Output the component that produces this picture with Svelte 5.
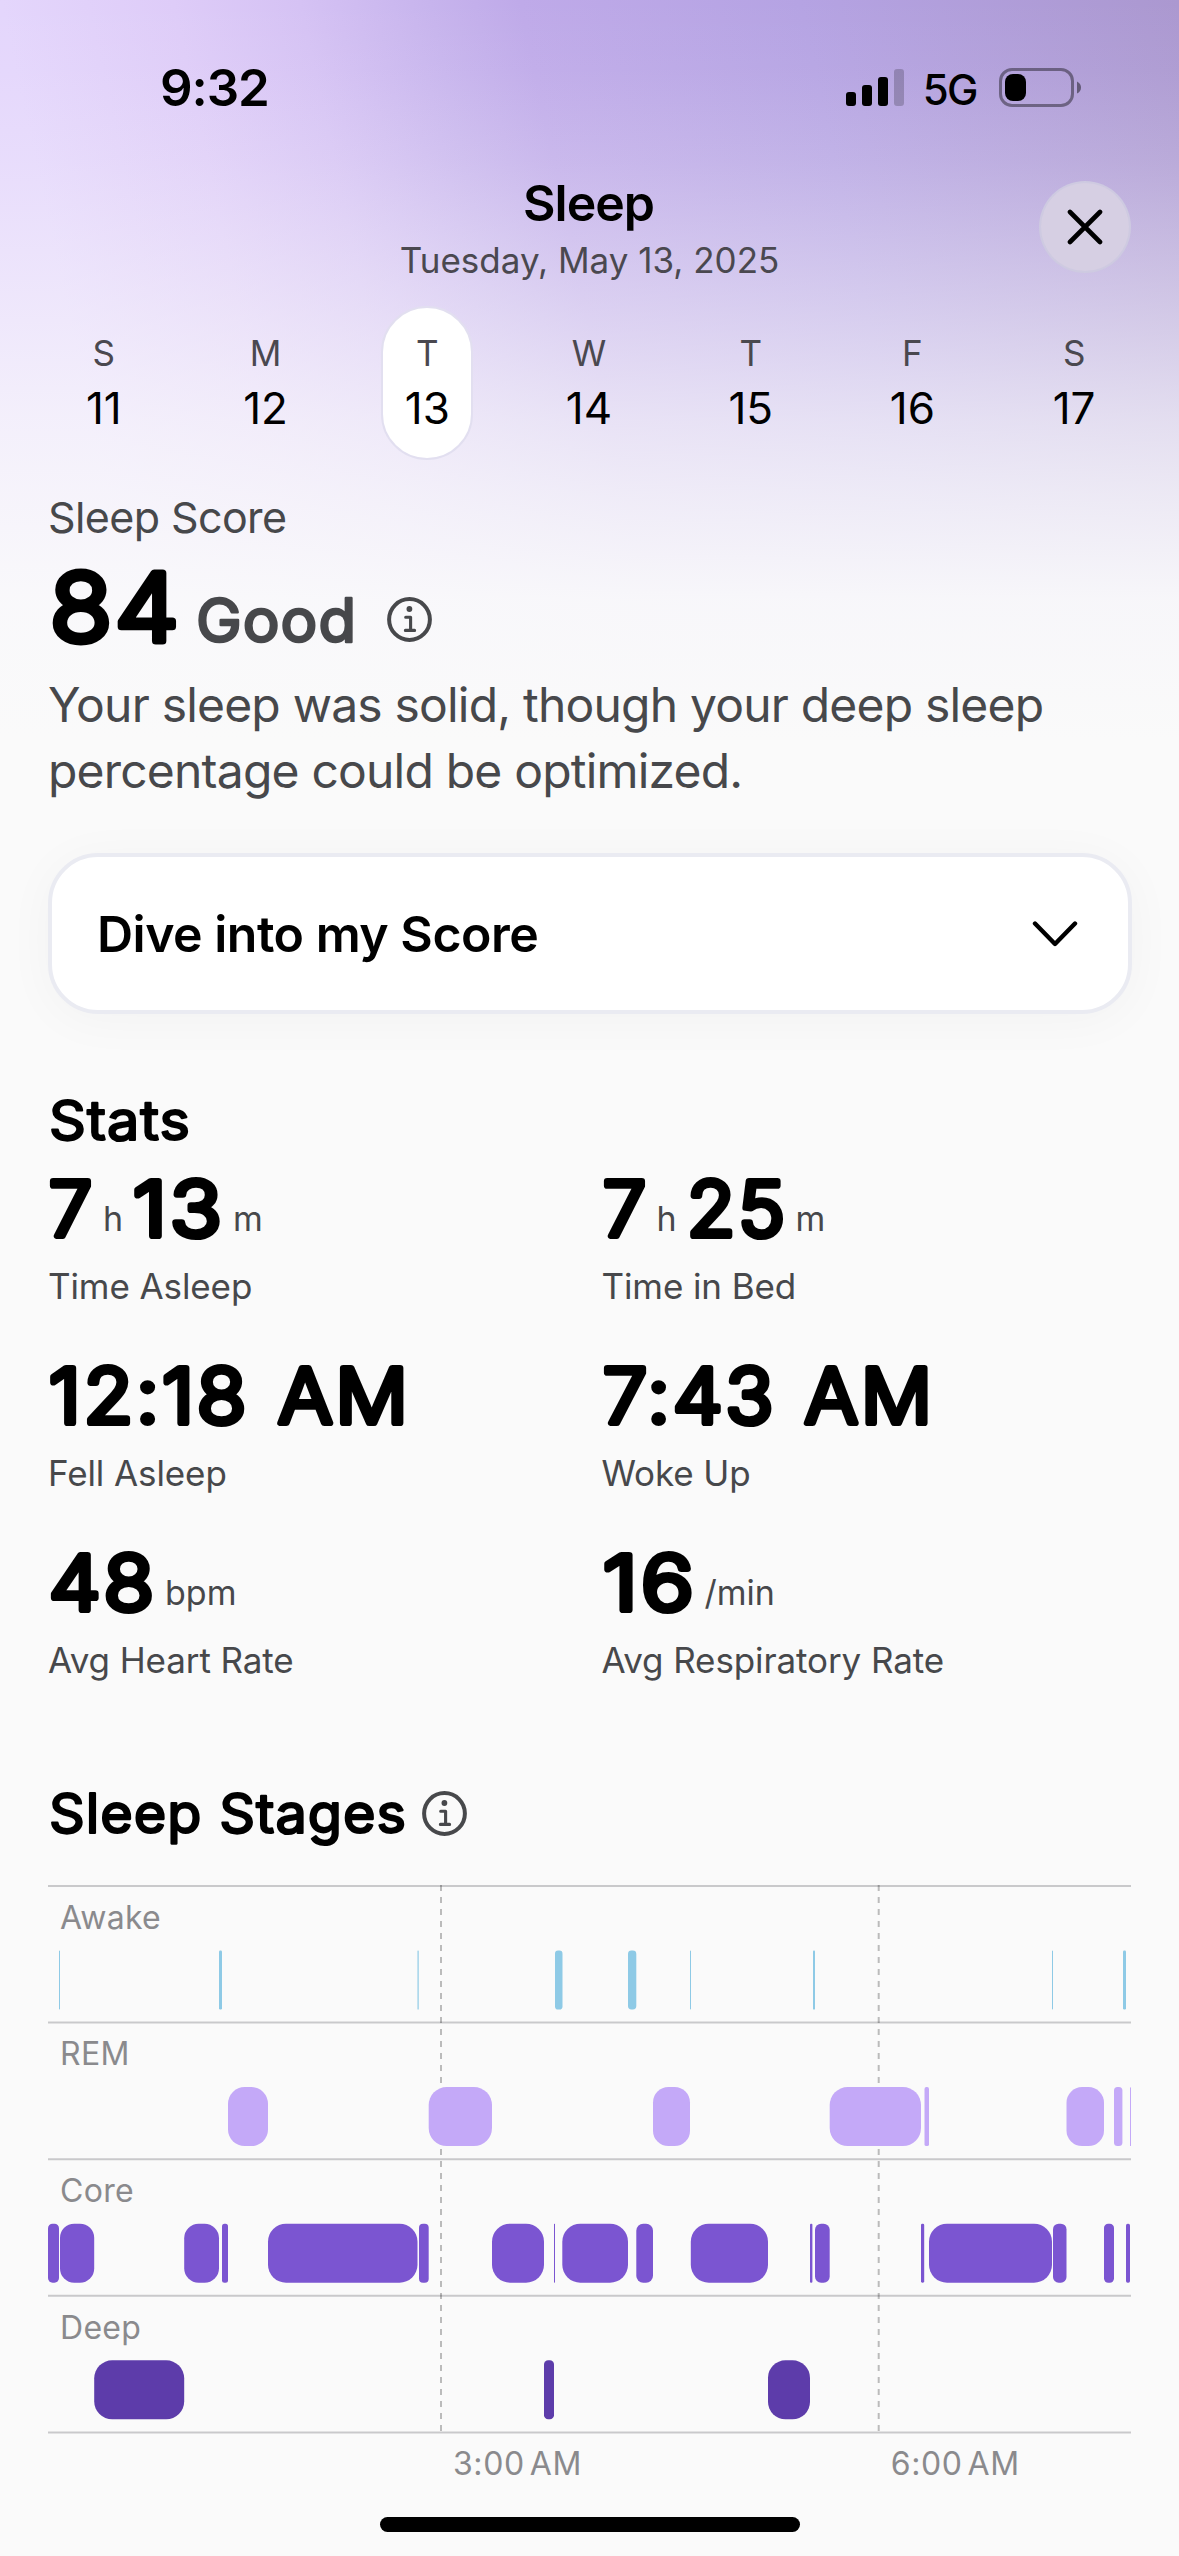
<script lang="ts">
  interface Day {
    letter: string;
    date: number;
  }

  interface StatPart {
    value: string;
    width: number;
    unit?: string;
  }

  interface Stat {
    label: string;
    parts: StatPart[];
  }

  interface Stage {
    name: string;
    color: string;
    bars: [number, number][];
  }

  let selected = 13;

  const days: Day[] = ['S', 'M', 'T', 'W', 'T', 'F', 'S'].map((letter, i) => ({ letter, date: 11 + i }));

  const stats: Stat[] = [
    { label: 'Time Asleep', parts: [{ value: '7', width: 43, unit: 'h' }, { value: '13', width: 89, unit: 'm' }] },
    { label: 'Time in Bed', parts: [{ value: '7', width: 43, unit: 'h' }, { value: '25', width: 98, unit: 'm' }] },
    { label: 'Fell Asleep', parts: [{ value: '12:18 AM', width: 359 }] },
    { label: 'Woke Up', parts: [{ value: '7:43 AM', width: 329 }] },
    { label: 'Avg Heart Rate', parts: [{ value: '48', width: 105, unit: 'bpm' }] },
    { label: 'Avg Respiratory Rate', parts: [{ value: '16', width: 91, unit: '/min' }] }
  ];

  // [start, end] of each segment, in chart units
  const stages: Stage[] = [
    {
      name: 'Awake',
      color: '#8ecae6',
      bars: [[11, 12], [171, 174], [369.5, 370.7], [507, 514.5], [580, 588.3], [642, 643], [765, 767], [1004, 1005], [1075, 1078]]
    },
    {
      name: 'REM',
      color: '#c4a9f8',
      bars: [[180, 220], [380.7, 444], [605, 642], [781.7, 873], [876.5, 881], [1018.5, 1056], [1066, 1074.4], [1082, 1083]]
    },
    {
      name: 'Core',
      color: '#7b55d1',
      bars: [
        [0, 11], [12, 46.2], [136.2, 171], [174, 180], [220, 369.5], [371, 380.7], [444, 496], [506, 507],
        [514.3, 580], [588.3, 605], [642.8, 720], [762, 764.4], [767, 781.7], [873, 876.2], [881, 1004],
        [1005, 1018.5], [1056, 1066], [1078, 1082]
      ]
    },
    {
      name: 'Deep',
      color: '#5d3caa',
      bars: [[46.2, 136.2], [496, 506], [720, 762]]
    }
  ];

  const ticks = [
    { x: 393, label: '3:00 AM' },
    { x: 830.7, label: '6:00 AM' }
  ];

  const rowHeight = 136.6;
</script>

{#snippet info()}
  <svg class="info" viewBox="0 0 45 45" fill="none" stroke="currentColor">
    <circle cx="22.5" cy="22.5" r="20.4" stroke-width="4" />
    <circle cx="22.4" cy="12" r="2.9" fill="currentColor" stroke="none" />
    <path d="M18.7 20.3H23.6V33.4M18.4 33.4H27.6" stroke-width="3.1" stroke-linecap="round" stroke-linejoin="round" />
  </svg>
{/snippet}

<!-- lighter text with a round-joined stroke, gives soft terminals -->
{#snippet rounded(text: string, width: number, height: number, stroke: number)}
  <svg class="rounded" {width} {height}>
    <text
      x="-1"
      y={height - stroke / 2}
      font-size={(height - stroke) / 0.727}
      stroke-width={stroke}
      textLength={width + 3}
      lengthAdjust="spacingAndGlyphs"
    >{text}</text>
  </svg>
{/snippet}

<div class="screen">
  <div class="status-bar">
    <span class="clock">9:32</span>
    <div class="status-icons">
      <svg width="58" height="37" viewBox="0 0 58 37">
        <rect x="0" y="23" width="10" height="14" rx="3" />
        <rect x="16" y="16" width="10" height="21" rx="3" />
        <rect x="32" y="8" width="10" height="29" rx="3" />
        <rect x="48" y="0" width="10" height="37" rx="3" opacity="0.2" />
      </svg>
      <span class="network">5G</span>
      <svg width="82" height="39" viewBox="0 0 82 39">
        <rect x="1.5" y="1.5" width="72" height="36" rx="11.5" fill="none" stroke="#000" stroke-width="3" opacity="0.4" />
        <rect x="6" y="6" width="21" height="27" rx="8" />
        <path d="M78 13.5Q82 15.500 82 19.500T78 25.500Z" opacity="0.45" />
      </svg>
    </div>
  </div>

  <header class="header">
    <div class="titles">
      <h1>Sleep</h1>
      <p class="date">Tuesday, May 13, 2025</p>
    </div>
    <button class="close" aria-label="Close">
      <svg width="36" height="36" viewBox="0 0 36 36">
        <path d="M3 3L33 33M33 3L3 33" stroke="#000" stroke-width="4.6" stroke-linecap="round" />
      </svg>
    </button>
  </header>

  <nav class="week">
    {#each days as day}
      <button class="day" class:active={day.date === selected} on:click={() => (selected = day.date)}>
        <span class="day-letter">{day.letter}</span>
        <span class="day-date">{day.date}</span>
      </button>
    {/each}
  </nav>

  <main>
    <p class="score-label">Sleep Score</p>
    <div class="score-row">
      <span class="score number">{@render rounded('84', 129, 75, 7)}</span>
      <span class="rating">{@render rounded('Good', 158, 47, 2.6)}</span>
      {@render info()}
    </div>
    <p class="summary">Your sleep was solid, though your deep sleep percentage could be optimized.</p>

    <button class="dive">
      <span>Dive into my Score</span>
      <svg width="46" height="28" viewBox="0 0 46 28" fill="none">
        <path d="M3 3.500L23 24L43 3.500" stroke="#000" stroke-width="4.400" stroke-linecap="round" stroke-linejoin="round" />
      </svg>
    </button>

    <h2 class="stats-title">{@render rounded('Stats', 139, 42, 2.2)}</h2>
    <div class="stats">
      {#each stats as stat}
        <div class="stat">
          <div class="stat-value number">
            {#each stat.parts as part}
              {@render rounded(part.value, part.width, 61, 6.2)}
              {#if part.unit}
                <span class="unit">{part.unit}</span>
              {/if}
            {/each}
          </div>
          <p class="stat-label">{stat.label}</p>
        </div>
      {/each}
    </div>

    <div class="stages-title">
      <h2>{@render rounded('Sleep Stages', 355, 42, 2.2)}</h2>
      {@render info()}
    </div>

    <svg class="chart" width="1083" height="610" viewBox="0 0 1083 610">
      {#each [0, 1, 2, 3, 4] as line}
        <line x1="0" x2="1083" y1={line * rowHeight + 1} y2={line * rowHeight + 1} class="rule" />
      {/each}
      {#each ticks as tick}
        <line x1={tick.x} x2={tick.x} y1="0" y2={rowHeight * 4 + 1} class="tick" />
        <text x={tick.x + 12} y="590" class="chart-label tick-label">{tick.label}</text>
      {/each}
      {#each stages as stage, row}
        <text x="12" y={row * rowHeight + 43.8} class="chart-label">{stage.name}</text>
        {#each stage.bars as [start, end]}
          <rect
            x={start}
            y={row * rowHeight + 65.5}
            width={end - start}
            height="59"
            rx={Math.min(18, (end - start) / 2.4)}
            fill={stage.color}
          />
        {/each}
      {/each}
    </svg>
  </main>

  <div class="home-indicator"></div>
</div>

<style>
  :global(body) {
    background: #fafafa;
  }

  .screen {
    width: 1179px;
    height: 2556px;
    display: flex;
    flex-direction: column;
    overflow: hidden;
    box-sizing: border-box;
    font-family: Inter, 'Liberation Sans', sans-serif;
    color: #000;
    background:
      linear-gradient(
        to bottom,
        rgba(250, 250, 251, 0) 0,
        rgba(250, 250, 251, 0.05) 70px,
        rgba(250, 250, 251, 0.18) 160px,
        rgba(250, 250, 251, 0.46) 300px,
        rgba(250, 250, 251, 0.7) 420px,
        rgba(250, 250, 251, 0.81) 490px,
        rgba(250, 250, 251, 0.96) 600px,
        #fafafa 740px
      ),
      linear-gradient(
        78deg,
        #e4d6fc 158px,
        #deccf8 327px,
        #d5c2f4 451px,
        #c7b4ed 578px,
        #bfaae9 666px,
        #b5a3e3 940px,
        #ab98d0 1311px
      );
    background-color: #fafafa;
    background-repeat: no-repeat;
    background-size: 100% 760px;
  }

  h1,
  h2,
  p {
    margin: 0;
  }

  button {
    font-family: inherit;
    color: inherit;
    padding: 0;
    border: none;
    background: none;
  }

  svg {
    display: block;
    flex: none;
  }

  .rounded {
    overflow: visible;
    font-weight: 400;
    letter-spacing: 1px;
    fill: currentColor;
    stroke: currentColor;
    stroke-linejoin: round;
  }

  .number .rounded {
    font-weight: 300;
    letter-spacing: 3px;
    word-spacing: 3px;
  }

  .status-bar {
    height: 175px;
    display: flex;
    align-items: center;
    justify-content: space-between;
    padding: 0 98px 0 160px;
  }

  .clock {
    font-size: 51px;
    font-weight: 600;
    letter-spacing: -1.1px;
  }

  .status-icons {
    display: flex;
    align-items: center;
  }

  .network {
    margin: 3px 22px 0 19px;
    font-size: 42px;
    font-weight: 500;
    letter-spacing: -1.5px;
  }

  .header {
    display: grid;
    grid-template-columns: 1fr auto 1fr;
    height: 114px;
    padding: 0 48px;
  }

  .titles {
    grid-column: 2;
    text-align: center;
  }

  h1 {
    padding-right: 2px;
    font-size: 50px;
    font-weight: 600;
    line-height: 56px;
    letter-spacing: -1px;
  }

  .date {
    font-size: 35px;
    line-height: 58px;
    color: #4a484f;
  }

  .close {
    box-sizing: border-box;
    justify-self: end;
    margin-top: 6px;
    width: 92px;
    height: 92px;
    display: flex;
    align-items: center;
    justify-content: center;
    border-radius: 50%;
    border: 2px solid rgba(204, 200, 224, 0.8);
    background: #d6cfe3;
  }

  .week {
    display: grid;
    grid-template-columns: repeat(7, 1fr);
    justify-items: center;
    margin-top: 17px;
    padding: 0 24px 0 23px;
  }

  .day {
    box-sizing: border-box;
    width: 92px;
    height: 154px;
    padding-top: 20px;
    display: flex;
    flex-direction: column;
    align-items: center;
    border: 2px solid transparent;
    border-radius: 46px;
  }

  .day.active {
    background: #fff;
    border-color: #e2dff0;
  }

  .day-letter {
    font-size: 35px;
    line-height: 50px;
    color: #4a484f;
  }

  .day-date {
    font-size: 44px;
    line-height: 60px;
  }

  main {
    padding: 0 48px;
  }

  .score-label {
    margin-top: 27px;
    font-size: 43px;
    line-height: 60px;
    letter-spacing: -0.6px;
    color: #47484b;
  }

  .score-row {
    height: 100px;
    margin-top: 10px;
    display: flex;
    align-items: flex-end;
  }

  .score {
    margin: 0 17px 13px 3px;
  }

  .rating {
    margin-bottom: 14px;
    color: #47484b;
  }

  .info {
    width: 45px;
    height: 45px;
    color: #47484b;
  }

  .score-row .info {
    margin: 0 0 15px 32px;
  }

  .summary {
    margin-top: 15px;
    font-size: 48px;
    line-height: 66px;
    letter-spacing: -0.8px;
    color: #47484b;
  }

  .dive {
    box-sizing: border-box;
    width: 1084px;
    height: 161px;
    margin-top: 49px;
    padding: 0 50px 0 45px;
    display: flex;
    align-items: center;
    justify-content: space-between;
    border: 4px solid #eaebf2;
    border-radius: 50px;
    background: #fff;
    box-shadow: 0 6px 50px rgba(0, 0, 0, 0.035);
    font-size: 50px;
    font-weight: 600;
    letter-spacing: -0.5px;
  }

  h2 {
    height: 68px;
    display: flex;
    align-items: center;
    padding-left: 2px;
  }

  .stats-title {
    margin-top: 72px;
  }

  .stats {
    margin-top: 13px;
    display: grid;
    grid-template-columns: repeat(2, 1fr);
    gap: 43px 24px;
  }

  .stat-value {
    display: flex;
    align-items: flex-end;
    height: 84px;
    padding-left: 2px;
  }

  .stat-value .rounded {
    margin-bottom: 12px;
  }

  .unit {
    margin: 0 11px 7px 10px;
    font-size: 34px;
    line-height: 50px;
    color: #47484b;
  }

  .stat-label {
    margin-top: 10px;
    font-size: 35px;
    line-height: 50px;
    letter-spacing: -0.1px;
    color: #47484b;
  }

  .stages-title {
    margin-top: 94px;
    display: flex;
    align-items: center;
    gap: 17px;
  }

  .chart {
    margin-top: 38px;
  }

  .rule {
    stroke: #c9c9cb;
    stroke-width: 2;
  }

  .tick {
    stroke: #000;
    stroke-opacity: 0.25;
    stroke-width: 2;
    stroke-dasharray: 6 6;
  }

  .chart-label {
    font-size: 32px;
    letter-spacing: 0.3px;
    fill: #8a8a8d;
  }

  .tick-label {
    letter-spacing: 0.6px;
    word-spacing: -4.5px;
  }

  .home-indicator {
    width: 420px;
    height: 15px;
    margin: auto auto 24px;
    border-radius: 8px;
    background: #000;
  }
</style>
